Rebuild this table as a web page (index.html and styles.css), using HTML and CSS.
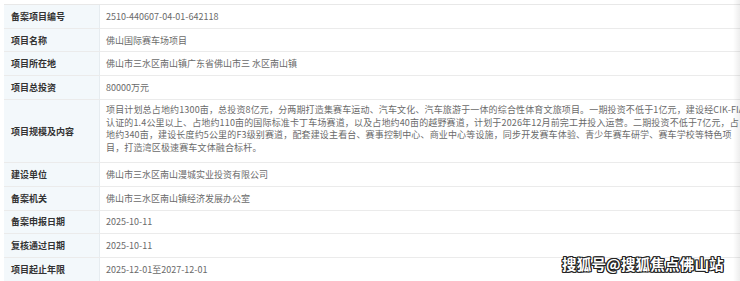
FILE: index.html
```html
<!DOCTYPE html>
<html lang="zh-CN">
<head>
<meta charset="utf-8">
<title>备案项目信息</title>
<link rel="stylesheet" href="styles.css">
</head>
<body>
<div class="frame">
  <div class="table">
    <div class="row"><div class="label">备案项目编号</div><div class="value">2510-440607-04-01-642118</div></div>
    <div class="row"><div class="label">项目名称</div><div class="value">佛山国际赛车场项目</div></div>
    <div class="row"><div class="label">项目所在地</div><div class="value">佛山市三水区南山镇广东省佛山市三 水区南山镇</div></div>
    <div class="row"><div class="label">项目总投资</div><div class="value">80000万元</div></div>
    <div class="row tall"><div class="label">项目规模及内容</div><div class="value multi">项目计划总占地约1300亩，总投资8亿元，分两期打造集赛车运动、汽车文化、汽车旅游于一体的综合性体育文旅项目。一期投资不低于1亿元，建设经CIK-FIA<br>认证的1.4公里以上、占地约110亩的国际标准卡丁车场赛道，以及占地约40亩的越野赛道，计划于2026年12月前完工并投入运营。二期投资不低于7亿元，占<br>地约340亩，建设长度约5公里的F3级别赛道，配套建设主看台、赛事控制中心、商业中心等设施，同步开发赛车体验、青少年赛车研学、赛车学校等特色项<br>目，打造湾区极速赛车文体融合标杆。</div></div>
    <div class="row"><div class="label">建设单位</div><div class="value">佛山市三水区南山漫城实业投资有限公司</div></div>
    <div class="row"><div class="label">备案机关</div><div class="value">佛山市三水区南山镇经济发展办公室</div></div>
    <div class="row"><div class="label">备案申报日期</div><div class="value">2025-10-11</div></div>
    <div class="row"><div class="label">复核通过日期</div><div class="value">2025-10-11</div></div>
    <div class="row"><div class="label">项目起止年限</div><div class="value">2025-12-01至2027-12-01</div></div>
  </div>
  <div class="edge-shadow"></div>
  <div class="watermark">搜狐号@搜狐焦点佛山站</div>
</div>
</body>
</html>
```

FILE: styles.css
```css
html, body {
  margin: 0;
  padding: 0;
  background: #ffffff;
  overflow: hidden;
}

body {
  font-family: "Noto Sans CJK SC", "Noto Sans", sans-serif;
  font-size: 9px;
}

.frame {
  position: relative;
  width: 740px;
  height: 281px;
  overflow: hidden;
  padding: 4px 0 0 4px;
  box-sizing: border-box;
}

.table {
  width: 800px;
  border-top: 1px solid #e8e8e8;
}

.row {
  display: grid;
  grid-template-columns: 96px 1fr;
  height: 23.7px;
  border-bottom: 1px solid #ebebeb;
  box-sizing: border-box;
}

.row.tall {
  height: 63.5px;
}

.label {
  background: #f3f8fb;
  border-right: 1px solid #e6ecf0;
  color: #333333;
  font-weight: 700;
  padding-left: 7px;
  display: flex;
  align-items: center;
}

.value {
  color: #6a6a6a;
  padding-left: 6px;
  display: flex;
  align-items: center;
  white-space: nowrap;
}

.value.multi {
  display: block;
  line-height: 12.8px;
  padding-top: 4px;
  letter-spacing: 0.15px;
}

.edge-shadow {
  position: absolute;
  top: 0;
  right: 0;
  width: 7px;
  height: 100%;
  background: linear-gradient(to right, rgba(0, 0, 0, 0), rgba(0, 0, 0, 0.07));
}

.watermark {
  position: absolute;
  left: 562px;
  top: 256px;
  font-size: 14.5px;
  line-height: 16px;
  font-weight: 700;
  color: #ffffff;
  letter-spacing: 0.2px;
  text-shadow:
    1px 0 0 #222, -1px 0 0 #222, 0 1px 0 #222, 0 -1px 0 #222,
    1px 1px 0 #222, -1px -1px 0 #222, 1px -1px 0 #222, -1px 1px 0 #222;
}
```
